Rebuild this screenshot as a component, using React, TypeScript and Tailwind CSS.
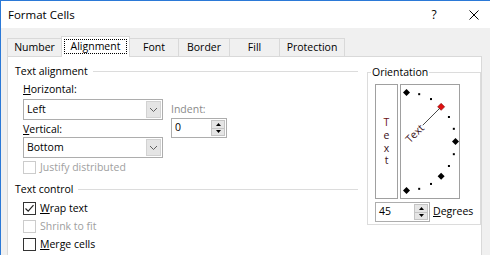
import React from "react";

const F = "font-['Open_Sans','Noto_Sans',sans-serif]";

function Chevron() {
  return (
    <svg width="9" height="6" viewBox="0 0 9 6">
      <path d="M1 1 L4.5 4.5 L8 1" fill="none" stroke="#606060" strokeWidth="1" />
    </svg>
  );
}

function Select({ value }: { value: string }) {
  return (
    <div className="flex h-[21px] w-[140px] border border-[#adadad] bg-white">
      <div className="flex flex-1 items-center pl-[3px]">{value}</div>
      <div className="m-px flex w-[15px] items-center justify-center border border-[#d2d2d2] bg-[#e5e5e5]">
        <Chevron />
      </div>
    </div>
  );
}

function Spin({ value, w }: { value: string; w: string }) {
  return (
    <div className={`flex h-[20px] border border-[#adadad] bg-white ${w}`}>
      <div className="flex flex-1 items-center pl-[3px]">{value}</div>
      <div className="m-px flex w-[14px] flex-col border border-[#c4c4c4] bg-[#e5e5e5]">
        <div className="flex flex-1 items-center justify-center border-b border-[#c4c4c4]">
          <svg width="5" height="3" viewBox="0 0 5 3">
            <path d="M0 3 L2.5 0 L5 3 Z" fill="#000" />
          </svg>
        </div>
        <div className="flex flex-1 items-center justify-center">
          <svg width="5" height="3" viewBox="0 0 5 3">
            <path d="M0 0 L2.5 3 L5 0 Z" fill="#000" />
          </svg>
        </div>
      </div>
    </div>
  );
}

function Check({ checked, disabled, children }: { checked?: boolean; disabled?: boolean; children: React.ReactNode }) {
  return (
    <div className={`flex h-[13px] items-center ${disabled ? "text-[#a0a0a0]" : "text-black"}`}>
      <div
        className={`flex h-[13px] w-[13px] items-center justify-center border bg-white ${
          disabled ? "border-[#cccccc]" : "border-[#333333]"
        }`}
      >
        {checked && (
          <svg width="11" height="11" viewBox="0 0 11 11">
            <path d="M1.5 5.5 L4.2 8.2 L9.5 2.2" fill="none" stroke="#222" strokeWidth="1.2" />
          </svg>
        )}
      </div>
      <div className="ml-[4px] leading-[13px]">{children}</div>
    </div>
  );
}

function GroupHeader({ label }: { label: string }) {
  return (
    <div className="flex h-[14px] items-center">
      <span className="leading-[14px]">{label}</span>
      <div className="ml-[5px] h-px flex-1 bg-[#dcdcdc]" />
    </div>
  );
}

function Tab({ label, w, selected }: { label: string; w: string; selected?: boolean }) {
  if (selected) {
    return (
      <div className={`relative z-10 -mb-px -ml-px flex h-[21px] border border-b-0 border-[#d9d9d9] bg-white p-[2px] pb-[3px] ${w}`}>
        <div className="flex flex-1 items-center justify-center border border-dotted border-black">{label}</div>
      </div>
    );
  }
  return (
    <div className={`-ml-px flex h-[18px] items-center justify-center border border-b-0 border-[#d9d9d9] bg-[#f0f0f0] ${w}`}>
      {label}
    </div>
  );
}

function Dial() {
  const cx = 5.5;
  const cy = 56.5;
  const r = 49;
  const pts = [];
  for (let i = 0; i <= 12; i++) {
    const deg = 90 - i * 15;
    const a = (deg * Math.PI) / 180;
    const x = cx + r * Math.cos(a);
    const y = cy - r * Math.sin(a);
    const big = deg % 45 === 0;
    const red = deg === 45;
    if (big) {
      pts.push(
        <polygon
          key={i}
          points={`${x},${y - 3.5} ${x + 3.5},${y} ${x},${y + 3.5} ${x - 3.5},${y}`}
          fill={red ? "#e01010" : "#000"}
          stroke={red ? "#7a0000" : "none"}
          strokeWidth={red ? 0.6 : 0}
        />
      );
    } else {
      pts.push(<rect key={i} x={x - 1} y={y - 1} width="2" height="2" fill="#000" />);
    }
  }
  const c = Math.SQRT1_2;
  return (
    <svg width="58" height="113" viewBox="0 0 58 113">
      {pts}
      <line x1={cx + 23 * c} y1={cy - 23 * c} x2={cx + 47 * c} y2={cy - 47 * c} stroke="#333" strokeWidth="0.9" />
      <text
        x={cx + 1}
        y={cy + 4}
        transform={`rotate(-45 ${cx} ${cy})`}
        fontSize="10.5"
        fill="#3a1020"
        fontFamily="Open Sans, sans-serif"
      >
        Text
      </text>
    </svg>
  );
}

export default function App() {
  return (
    <div className={`${F} h-[255px] w-[490px] overflow-hidden border-l border-t border-[#2b79d7] bg-[#f0f0f0] text-[10.5px] text-black`}>
      {/* Title bar */}
      <div className="flex h-[27px] items-center bg-white">
        <div className="pl-[7px] text-[11.5px]">Format Cells</div>
        <div className="flex-1" />
        <div className="w-[10px] text-center text-[12px]">?</div>
        <div className="ml-[30px] mr-[11px] flex h-[10px] w-[10px]">
          <svg width="10" height="10" viewBox="0 0 10 10">
            <path d="M0.5 0.5 L9.5 9.5 M9.5 0.5 L0.5 9.5" stroke="#000" strokeWidth="1" />
          </svg>
        </div>
      </div>

      {/* Tabs */}
      <div className="flex h-[28px] items-end pl-[7px]">
        <Tab label="Number" w="w-[55px]" />
        <Tab label="Alignment" w="w-[69px]" selected />
        <Tab label="Font" w="w-[50px]" />
        <Tab label="Border" w="w-[52px]" />
        <Tab label="Fill" w="w-[51px]" />
        <Tab label="Protection" w="w-[66px]" />
      </div>

      {/* Panel */}
      <div className="ml-[6px] flex h-[220px] w-[475px] border border-[#d9d9d9] bg-white pl-[7px] pt-[7px]">
        {/* Left column */}
        <div className="flex w-[343px] flex-col">
          <GroupHeader label="Text alignment" />
          <div className="flex pl-[8px]">
            <div className="flex w-[140px] flex-col">
              <div className="mt-[4px] h-[14px] leading-[14px]">
                <span className="underline">H</span>orizontal:
              </div>
              <div className="mt-[3px]">
                <Select value="Left" />
              </div>
              <div className="mt-[2px] h-[14px] leading-[14px]">
                <span className="underline">V</span>ertical:
              </div>
              <div className="mt-[1px]">
                <Select value="Bottom" />
              </div>
              <div className="mt-[3px]">
                <Check disabled>Justify distributed</Check>
              </div>
            </div>
            <div className="ml-[8px] flex flex-col pt-[24px]">
              <div className="h-[14px] leading-[14px] text-[#8a8a8a]">Indent:</div>
              <div className="mt-[2px]">
                <Spin value="0" w="w-[56px]" />
              </div>
            </div>
          </div>
          <div className="mt-[8px]">
            <GroupHeader label="Text control" />
          </div>
          <div className="flex flex-col pl-[8px]">
            <div className="mt-[6px]">
              <Check checked>
                <span className="underline">W</span>rap text
              </Check>
            </div>
            <div className="mt-[5px]">
              <Check disabled>Shrink to fit</Check>
            </div>
            <div className="mt-[5px]">
              <Check>
                <span className="underline">M</span>erge cells
              </Check>
            </div>
          </div>
        </div>

        {/* Orientation */}
        <div className="ml-[9px] mt-[8px]">
          <div className="relative h-[153px] w-[114px] border border-[#dcdcdc] pl-[7px] pt-[11px]">
            <div className="absolute left-[3px] top-[-8px] bg-white px-[1px] leading-[14px]">Orientation</div>
            <div className="flex">
              <div className="flex h-[115px] w-[23px] flex-col items-center justify-center border border-[#a0a0a0] text-[10.5px] leading-[12.7px] text-[#3a1020]">
                <span className="text-[#6a1010]">T</span>
                <span>e</span>
                <span>x</span>
                <span>t</span>
              </div>
              <div className="ml-[2px] h-[115px] w-[60px] border border-[#a0a0a0]">
                <Dial />
              </div>
            </div>
            <div className="mt-[3px] flex items-center">
              <Spin value="45" w="w-[55px]" />
              <div className="ml-[3px]">
                <span className="underline">D</span>egrees
              </div>
            </div>
          </div>
        </div>
      </div>
    </div>
  );
}
